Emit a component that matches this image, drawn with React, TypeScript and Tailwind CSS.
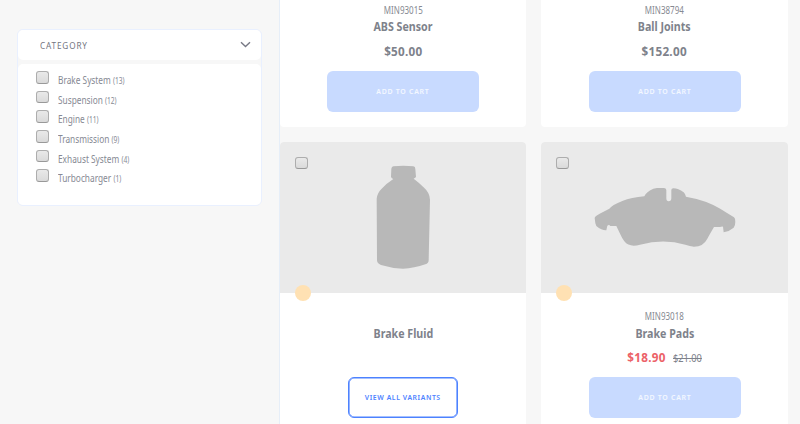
import React from 'react';

const categories = [
  { name: 'Brake System', count: 13 },
  { name: 'Suspension', count: 12 },
  { name: 'Engine', count: 11 },
  { name: 'Transmission', count: 9 },
  { name: 'Exhaust System', count: 4 },
  { name: 'Turbocharger', count: 1 },
];

function Checkbox() {
  return (
    <span className="block h-[12.5px] w-[13px] shrink-0 rounded-[3px] border border-[#adadad] border-b-[#999999] bg-linear-to-b from-[#e9e9e9] to-[#dadada]" />
  );
}

function Sidebar() {
  return (
    <aside className="h-full w-[280px] shrink-0 border-r border-[#e6eef8] pt-[29px] pl-[17px]">
      <div className="h-[177px] w-[245px] rounded-[6px] border border-[#e9f0ff] bg-[#f7f7f7]">
        <div className="flex h-[30px] items-center justify-between rounded-[5px] bg-white pr-[10px] pl-[22px]">
          <span className="mt-px origin-left scale-x-[0.86] text-[9.5px] leading-[12px] tracking-[1px] text-[#737581]">CATEGORY</span>
          <svg width="11" height="8" viewBox="0 0 11 8" fill="none" stroke="#777985" strokeWidth="1.4" className="mb-px">
            <path d="M1 1.3L5.5 5.6L10 1.3" />
          </svg>
        </div>
        <ul className="mt-[4px] h-[141px] rounded-[5px] bg-white pt-[7px] pl-[18px]">
          {categories.map((c) => (
            <li key={c.name} className="flex h-[19.7px] items-start">
              <Checkbox />
              <span className="mt-[3px] ml-[8.5px] origin-left scale-x-[0.83] text-[10px] leading-[12px] whitespace-nowrap text-[#868993]">
                {c.name} <span className="text-[8px]">({c.count})</span>
              </span>
            </li>
          ))}
        </ul>
      </div>
    </aside>
  );
}

function AddToCart() {
  return (
    <button className="flex h-[41px] w-[152px] items-center justify-center rounded-[6px] bg-[#c8daff] pb-px text-[7.5px] leading-[10px] font-semibold tracking-[0.8px] text-white/80">
      <span className="scale-x-[0.92]">ADD TO CART</span>
    </button>
  );
}

function Sku({ children }: { children: React.ReactNode }) {
  return <div className="h-[12px] scale-x-[0.8] text-[10px] leading-[12px] text-[#868991]">{children}</div>;
}

function Title({ children }: { children: React.ReactNode }) {
  return <div className="h-[18px] scale-x-[0.82] text-[13px] leading-[18px] font-bold text-[#7e828b]">{children}</div>;
}

function TopCard({ sku, title, price }: { sku: string; title: string; price: string }) {
  return (
    <article className="flex h-[127px] flex-col items-center rounded-b-[4px] bg-white pt-[4px]">
      <Sku>{sku}</Sku>
      <div className="mt-px"><Title>{title}</Title></div>
      <div className="mt-[7px] h-[18px] scale-x-[0.9] text-[13px] leading-[18px] font-bold tracking-[0.3px] text-[#7e828b]">{price}</div>
      <div className="mt-[10.5px]"><AddToCart /></div>
    </article>
  );
}

function ImagePanel({ children }: { children: React.ReactNode }) {
  return (
    <div className="relative h-[151.5px] w-full rounded-t-[4px] bg-[#eaeaea]">
      {children}
      <span className="absolute top-[15px] left-[15px]"><Checkbox /></span>
      <span className="absolute -bottom-[7.5px] left-[15px] h-[15.5px] w-[15.5px] rounded-full bg-[#ffe1b3]" />
    </div>
  );
}

function Bottle() {
  return (
    <svg className="block h-[152px] w-[246px]" viewBox="30 36 738 456" fill="#b8b8b8">
      <path d="M370 109Q400 106 430 109Q436 110 436 117L438 141Q436 143 431 146Q445 156 463 174Q479 188 480 209L476 391Q476 400 466 403Q433 415 399 416Q365 415 333 405Q321 400 321 391L320 206Q322 188 335 176Q350 160 370 147Q365 145 363 141L364 116Q365 110 370 109Z" />
    </svg>
  );
}

function BrakePad() {
  return (
    <svg className="block h-[152px] w-[246.67px]" viewBox="33 36 740 456" fill="#b8b8b8">
      <path d="M343 199Q347 187 370 176L381 174H402Q408 174 409 180V204Q409 214 416 214Q424 214 424 204V180Q424 175 430 175Q445 175 461 187Q467 193 468 200Q530 211 568 235Q584 245 612 262Q616 265 616 275Q616 288 611 293Q598 304 581 307L579 290Q577 288 570 291L552 291Q546 301 532 326Q520 350 492 350Q480 349 466 344Q401 325 330 344Q298 353 283 334Q276 325 268 307L259 288L241 288L237 284L232 287L229 301Q216 302 199 288Q195 280 194 264Q195 258 209 251L238 236Q245 226 277 213Q304 202 343 199Z" />
    </svg>
  );
}

export default function App() {
  return (
    <div className="flex h-[424px] w-[800px] overflow-hidden bg-[#f7f7f7] font-['Noto_Sans',sans-serif]">
      <Sidebar />
      <main className="grid h-[424px] w-[508px] grid-cols-[246px_247px] grid-rows-[126.5px_282.5px] gap-[15px]">
        <TopCard sku="MIN93015" title="ABS Sensor" price="$50.00" />
        <TopCard sku="MIN38794" title="Ball Joints" price="$152.00" />
        <article className="flex flex-col items-center rounded-t-[4px] bg-white">
          <ImagePanel><Bottle /></ImagePanel>
          <div className="mt-[31px]"><Title>Brake Fluid</Title></div>
          <button className="mt-[35px] flex h-[41px] w-[110px] items-center justify-center rounded-[6px] border border-[#4d82ff] bg-white pb-px text-[7.5px] leading-[10px] font-semibold tracking-[0.65px] whitespace-nowrap text-[#4d82ff] shadow-[inset_0_0_0_0.6px_#4d82ff]">
            <span className="scale-x-[0.91]">VIEW ALL VARIANTS</span>
          </button>
        </article>
        <article className="flex flex-col items-center rounded-t-[4px] bg-white">
          <ImagePanel><BrakePad /></ImagePanel>
          <div className="mt-[17px]"><Sku>MIN93018</Sku></div>
          <div className="mt-[2px]"><Title>Brake Pads</Title></div>
          <div className="mt-[6px] flex h-[18px] items-baseline leading-[18px]">
            <span className="origin-right scale-x-[0.9] text-[13px] font-bold tracking-[0.3px] text-[#ec6268]">$18.90</span>
            <span className="ml-[7.5px] origin-left scale-x-[0.88] text-[10.5px] text-[#7e828b] line-through">$21.00</span>
          </div>
          <div className="mt-[10.5px]"><AddToCart /></div>
        </article>
      </main>
    </div>
  );
}
